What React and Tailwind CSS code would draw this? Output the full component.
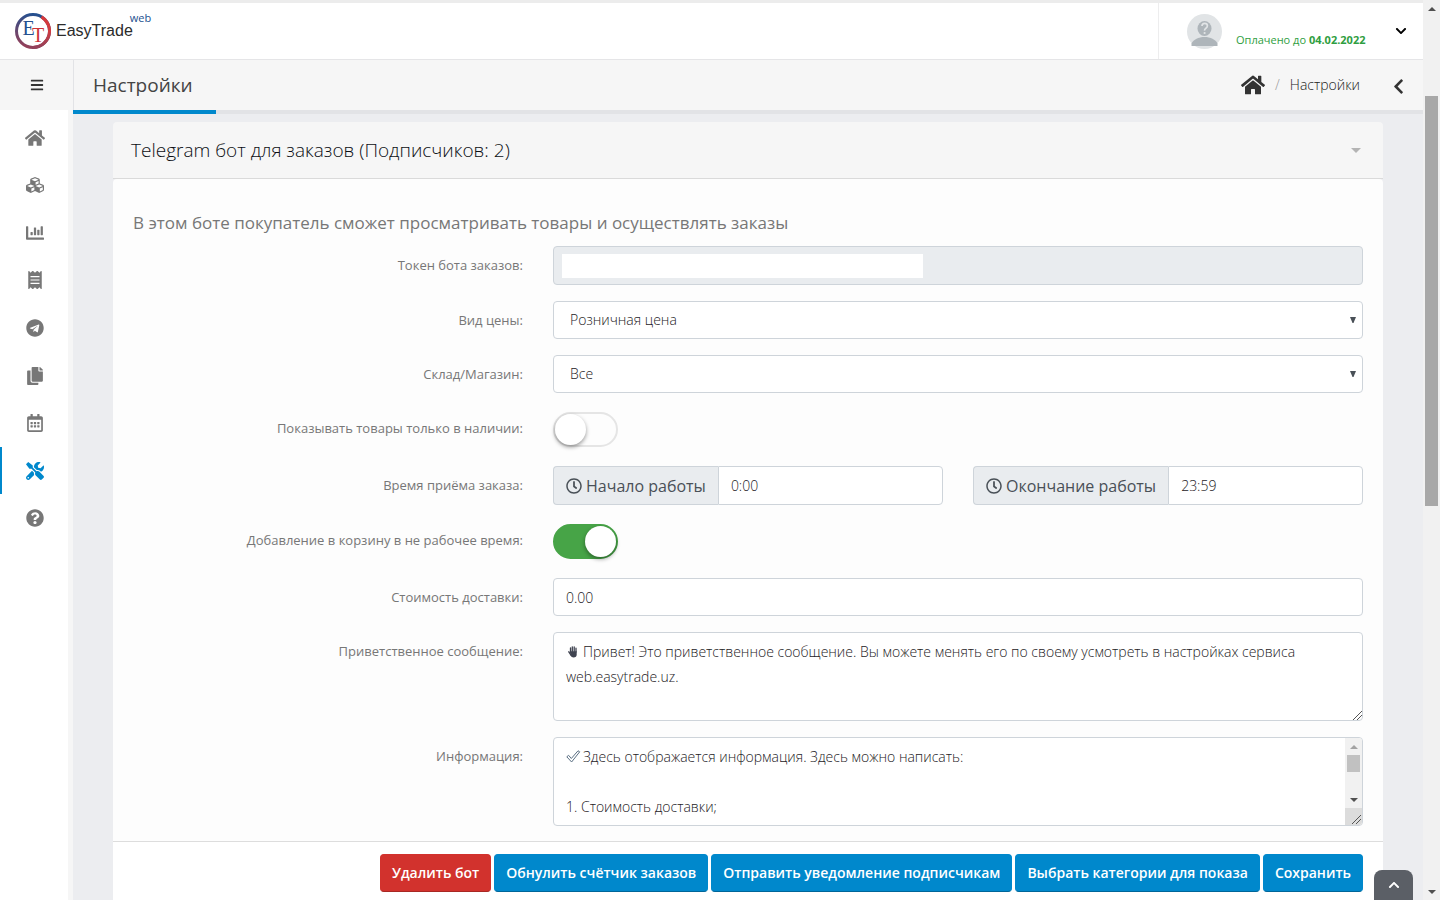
import React, { useState } from "react";
import {
  FaBars,
  FaChartBar,
  FaChevronDown,
  FaChevronLeft,
  FaChevronUp,
  FaCopy,
  FaCubes,
  FaHome,
  FaQuestionCircle,
  FaReceipt,
  FaRegCalendarAlt,
  FaRegClock,
  FaTelegram,
  FaTools,
} from "react-icons/fa";

const menu = [
  { label: "Главная", icon: FaHome, big: true },
  { label: "Товары", icon: FaCubes },
  { label: "Отчёты", icon: FaChartBar },
  { label: "Чеки", icon: FaReceipt },
  { label: "Telegram", icon: FaTelegram },
  { label: "Документы", icon: FaCopy },
  { label: "Календарь", icon: FaRegCalendarAlt },
  { label: "Настройки", icon: FaTools, active: true },
  { label: "Помощь", icon: FaQuestionCircle },
];

const fieldClass =
  "block w-full h-[38px] rounded border border-[#ced4da] bg-white px-3 text-sm font-light text-[#1d2125] outline-none";

function Logo() {
  return (
    <a href="#home" className="flex items-center gap-[5px]">
      <svg width="36" height="36" viewBox="0 0 36 36" aria-hidden="true">
        <defs>
          <linearGradient id="ring" x1="0.6" y1="0" x2="0.4" y2="1">
            <stop offset="0" stopColor="#24508f" />
            <stop offset="1" stopColor="#93415a" />
          </linearGradient>
          <linearGradient id="arc" x1="0" y1="0" x2="0" y2="1">
            <stop offset="0" stopColor="#d8383a" />
            <stop offset="0.5" stopColor="#cf3b40" />
            <stop offset="1" stopColor="#93415a" />
          </linearGradient>
        </defs>
        <circle cx="18" cy="18" r="16.5" fill="none" stroke="url(#ring)" strokeWidth="3" />
        <path d="M26.5 3.85A16.5 16.5 0 0 1 18 34.5" fill="none" stroke="url(#arc)" strokeWidth="3" />
        <text x="7.5" y="21.5" fontSize="20" fill="#24508f" fontFamily="Liberation Serif, serif">E</text>
        <text x="17" y="29" fontSize="20" fill="#cc3338" fontFamily="Liberation Serif, serif">T</text>
      </svg>
      <span className="relative font-['Liberation_Sans',sans-serif] text-base text-[#2b2b2b]">
        EasyTrade
        <sup className="absolute -top-[9px] left-full -ml-[3px] font-['Open_Sans',sans-serif] text-[11px] font-medium leading-4 text-[#24508f]">
          web
        </sup>
      </span>
    </a>
  );
}

function Avatar() {
  return (
    <svg width="35" height="35" viewBox="0 0 35 35" aria-hidden="true">
      <circle cx="17.5" cy="17.5" r="17.5" fill="#e1e4e6" />
      <ellipse cx="17.5" cy="14.5" rx="7" ry="7.6" fill="#aeb5ba" />
      <path d="M4.5 32v-2.5c2-4 7-6.5 13-6.5s11 2.5 13 6.5V32z" fill="#aeb5ba" />
      <path d="M15 12q0-2.7 2.7-2.7t2.7 2.5q0 1.5-1.5 2.4t-1.3 2.5" fill="none" stroke="#e1e4e6" strokeWidth="1.7" />
      <circle cx="17.6" cy="19" r="1.1" fill="#e1e4e6" />
    </svg>
  );
}

function Header() {
  return (
    <header className="flex h-[57px] items-stretch justify-between border-b border-[#e5e5e7] bg-white">
      <div className="flex items-center pl-[15px]">
        <Logo />
      </div>
      <button type="button" className="flex w-[265px] items-center border-l border-[#ededee] pl-7 pr-4">
        <Avatar />
        <span className="ml-3.5 mt-[18px] text-[11px] text-[#2f9e41]">
          Оплачено до <b className="font-bold">04.02.2022</b>
        </span>
        <FaChevronDown className="ml-auto size-3 text-black" />
      </button>
    </header>
  );
}

function PageHeader() {
  return (
    <div className="flex h-[50px] items-stretch bg-[#f6f6f6]">
      <button type="button" aria-label="Меню" className="flex w-[73px] items-center justify-center">
        <FaBars className="size-[14px] text-[#333333]" />
      </button>
      <div className="flex flex-1 items-center border-l border-[#e2e3e6] pl-[19px] pr-4">
        <h1 className="text-[19px] text-[#444444]">Настройки</h1>
        <nav className="ml-auto flex items-center text-sm font-light text-[#222222]">
          <a href="#home" aria-label="Главная">
            <FaHome className="size-6 text-[#333333]" />
          </a>
          <span className="mx-[10px] text-[#999999]">/</span>
          <span>Настройки</span>
        </nav>
        <button type="button" aria-label="Назад" className="ml-[30px] pt-[3px]">
          <FaChevronLeft className="size-[17px] text-[#333333]" />
        </button>
      </div>
    </div>
  );
}

function Sidebar() {
  return (
    <nav className="w-[73px] shrink-0 border-r-[5px] border-[#f6f6f6] bg-white pt-1">
      <ul className="grid h-[428px] grid-rows-9">
        {menu.map(({ label, icon: Icon, active, big }) => (
          <li key={label}>
            <a
              href="#menu"
              aria-label={label}
              className={`flex h-full items-center justify-center border-l-2 ${
                active ? "border-[#0088cc] text-[#0088cc]" : "border-transparent text-[#777777]"
              }`}
            >
              <Icon className={big ? "size-5" : "size-[18px]"} />
            </a>
          </li>
        ))}
      </ul>
    </nav>
  );
}

function Row({ id, label, children }) {
  return (
    <div className="grid grid-cols-3 gap-x-[30px]">
      <label htmlFor={id} className="text-right text-[13px] leading-[38px] text-[#777777]">
        {label}
      </label>
      <div className="col-span-2">{children}</div>
    </div>
  );
}

function Select({ id, options }) {
  return (
    <div className="relative">
      <select id={id} className={`${fieldClass} appearance-none pl-4`}>
        {options.map((option) => (
          <option key={option}>{option}</option>
        ))}
      </select>
      <svg className="pointer-events-none absolute right-[7px] top-4" width="6" height="6" viewBox="0 0 6 6">
        <path d="M0 0h6L3.5 6h-1z" fill="#495057" />
      </svg>
    </div>
  );
}

function Toggle({ id, checked, onChange }) {
  return (
    <div className="flex py-[3px]">
      <input
        id={id}
        type="checkbox"
        role="switch"
        checked={checked}
        onChange={(e) => onChange(e.target.checked)}
        className="h-[35px] w-[65px] appearance-none rounded-full border-2 border-[#e5e5e5] bg-[#fdfdfd] before:block before:size-[31px] before:rounded-full before:bg-white before:shadow-[0_2px_4px_rgba(0,0,0,0.4)] checked:border-[#47a447] checked:bg-[#47a447] checked:before:ml-[30px]"
      />
    </div>
  );
}

function TimeField({ id, label, value }) {
  return (
    <div className="flex">
      <label
        htmlFor={id}
        className="flex h-[39px] shrink-0 items-center gap-1 rounded-l border border-r-0 border-[#ced4da] bg-[#e9ecef] px-3 text-base text-[#495057]"
      >
        <FaRegClock className="size-4" />
        {label}
      </label>
      <input
        id={id}
        type="text"
        defaultValue={value}
        className="h-[39px] w-full min-w-0 flex-1 rounded-r border border-[#ced4da] bg-white px-3 text-sm font-light text-[#1d2125] outline-none"
      />
    </div>
  );
}

function Grip({ className }) {
  return (
    <svg className={className} width="9" height="9" viewBox="0 0 9 9" shapeRendering="crispEdges">
      <path d="M0 9L9 0M4 9L9 4" stroke="#555555" strokeWidth="1" />
    </svg>
  );
}

function Arrow({ up, color }) {
  return (
    <svg width="8" height="4" viewBox="0 0 8 4" className={up ? "" : "rotate-180"}>
      <path d="M4 0l4 4H0z" fill={color} />
    </svg>
  );
}

function Button({ danger, children }) {
  return (
    <button
      type="button"
      className={`h-[38px] rounded border px-[11px] text-sm font-semibold text-white ${
        danger ? "border-[#d2322d] border-b-[#a82824] bg-[#d2322d]" : "border-[#0088cc] border-b-[#006699] bg-[#0088cc]"
      }`}
    >
      {children}
    </button>
  );
}

function BotPanel() {
  const [inStock, setInStock] = useState(false);
  const [offHours, setOffHours] = useState(true);

  return (
    <section>
      <header className="flex h-[57px] items-center justify-between rounded-t border-b border-[#dadada] bg-[#f6f6f6] px-[18px]">
        <h2 className="text-[19px] font-light text-[#0c0f14]">Telegram бот для заказов (Подписчиков: 2)</h2>
        <button type="button" aria-label="Свернуть" className="pr-1">
          <svg width="10" height="5" viewBox="0 0 10 5">
            <path d="M0 0h10L5 5z" fill="#b4b4b4" />
          </svg>
        </button>
      </header>

      <div className="rounded-t bg-[#fdfdfd] px-5 pb-[15px] pt-8">
        <p className="mb-[11px] text-[17px] leading-6 text-[#777777]">
          В этом боте покупатель сможет просматривать товары и осуществлять заказы
        </p>

        <form className="flex flex-col gap-4">
          <Row id="token" label="Токен бота заказов:">
            <div className="flex h-[39px] items-center rounded border border-[#ced4da] bg-[#e9ecef] px-2">
              <input id="token" type="text" readOnly className="h-6 w-[361px] bg-white outline-none" />
            </div>
          </Row>
          <Row id="price" label="Вид цены:">
            <Select id="price" options={["Розничная цена", "Оптовая цена"]} />
          </Row>
          <Row id="store" label="Склад/Магазин:">
            <Select id="store" options={["Все"]} />
          </Row>
          <Row id="stock" label="Показывать товары только в наличии:">
            <Toggle id="stock" checked={inStock} onChange={setInStock} />
          </Row>
          <Row id="start" label="Время приёма заказа:">
            <div className="grid grid-cols-2 gap-[30px]">
              <TimeField id="start" label="Начало работы" value="0:00" />
              <TimeField id="end" label="Окончание работы" value="23:59" />
            </div>
          </Row>
          <Row id="offhours" label="Добавление в корзину в не рабочее время:">
            <Toggle id="offhours" checked={offHours} onChange={setOffHours} />
          </Row>
          <Row id="delivery" label="Стоимость доставки:">
            <input id="delivery" type="text" defaultValue="0.00" className={fieldClass} />
          </Row>
          <Row id="welcome" label="Приветственное сообщение:">
            <div className="relative">
              <textarea
                id="welcome"
                className="block h-[89px] w-full resize-none overflow-hidden rounded border border-[#ced4da] bg-white px-3 py-[6px] indent-[17px] text-sm font-light leading-[25px] text-[#1d2125] outline-none"
                defaultValue="Привет! Это приветственное сообщение. Вы можете менять его по своему усмотреть в настройках сервиса web.easytrade.uz."
              />
              <svg className="absolute left-[15px] top-[14px]" width="10" height="12" viewBox="0 0 10 12">
                <path
                  d="M2.5 6V2M4.3 5.5V.8M6.2 5.5V1M8 6V2.2M.8 5.8l2 3"
                  stroke="#3f4350"
                  strokeWidth="1.3"
                  strokeLinecap="round"
                />
                <path d="M1.9 5.2h6.8v3.3q0 3-3.2 3-2 0-3.1-2z" fill="#3f4350" />
              </svg>
              <Grip className="absolute bottom-px right-px" />
            </div>
          </Row>
          <Row id="info" label="Информация:">
            <div className="relative flex h-[89px] overflow-hidden rounded border border-[#ced4da] bg-white">
              <textarea
                id="info"
                className="min-w-0 flex-1 resize-none overflow-hidden px-3 py-[6px] indent-[17px] text-sm font-light leading-[25px] text-[#1d2125] outline-none"
                defaultValue={"Здесь отображается информация. Здесь можно написать:\n\n1. Стоимость доставки;"}
              />
              <svg className="absolute left-3 top-3" width="15" height="13" viewBox="0 0 15 13">
                <path
                  d="M.8 6.8l1.8-1.5 2.7 3.2L12 .8l1.7 1L5.6 12z"
                  fill="none"
                  stroke="#5b7084"
                  strokeWidth="1"
                />
              </svg>
              <div className="flex w-[17px] flex-col items-center bg-[#f1f1f1]">
                <div className="flex h-[17px] items-center">
                  <Arrow up color="#a3a3a3" />
                </div>
                <div className="h-[17px] w-[13px] bg-[#c1c1c1]" />
                <div className="mt-auto flex h-[17px] items-center">
                  <Arrow color="#505050" />
                </div>
                <div className="relative h-[17px] w-full bg-[#dcdcdc]">
                  <Grip className="absolute bottom-px right-px" />
                </div>
              </div>
            </div>
          </Row>
        </form>
      </div>

      <footer className="flex flex-wrap justify-end gap-[3px] border-t border-[#dddddd] bg-white px-5 py-3">
        <Button danger>Удалить бот</Button>
        <Button>Обнулить счётчик заказов</Button>
        <Button>Отправить уведомление подписчикам</Button>
        <Button>Выбрать категории для показа</Button>
        <Button>Сохранить</Button>
      </footer>
    </section>
  );
}

function Scrollbar() {
  return (
    <div className="flex w-[17px] shrink-0 flex-col items-center bg-[#f1f1f1]" aria-hidden="true">
      <div className="flex h-[17px] items-center">
        <Arrow up color="#505050" />
      </div>
      <div className="mt-[79px] h-[410px] w-[13px] bg-[#a8a8a8]" />
      <div className="mt-auto flex h-[17px] items-center">
        <Arrow color="#505050" />
      </div>
    </div>
  );
}

export default function App() {
  return (
    <div className="flex h-screen overflow-hidden font-['Open_Sans',sans-serif]">
      <div className="relative flex min-w-0 flex-1 flex-col border-t-[3px] border-[#ececec]">
        <Header />
        <PageHeader />
        <div className="flex min-h-0 flex-1">
          <Sidebar />
          <main className="min-w-0 flex-1 overflow-hidden bg-[#ecedf0]">
            <div className="h-1 bg-[#e2e3e6]">
              <div className="h-full w-[143px] bg-[#0088cc]" />
            </div>
            <div className="px-10 pt-2">
              <BotPanel />
            </div>
          </main>
        </div>
        <button
          type="button"
          aria-label="Наверх"
          className="absolute bottom-0 right-[10px] flex h-[30px] w-[39px] items-center justify-center rounded-t-lg bg-[#5b5f66] text-white"
        >
          <FaChevronUp className="size-3" />
        </button>
      </div>
      <Scrollbar />
    </div>
  );
}
